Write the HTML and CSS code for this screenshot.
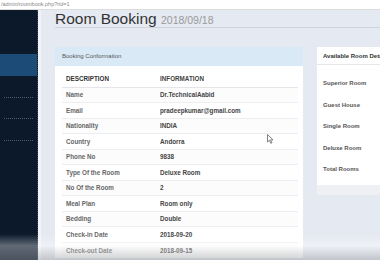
FILE: index.html
```html
<!DOCTYPE html>
<html lang="en">
<head>
  <meta charset="UTF-8">
  <title>Room Booking</title>
  <link rel="stylesheet" href="styles.css">
</head>
<body>
  <div class="urlbar">/admin/roombook.php?rid=1</div>
  <div class="app">
    <nav class="side">
      <div class="side-item"></div>
      <div class="side-item active"></div>
      <div class="side-item dots"></div>
      <div class="side-item dots"></div>
      <div class="side-item dots"></div>
    </nav>
    <div class="gutter"></div>
    <main class="main">
      <h1 class="page-title">Room Booking <small>2018/09/18</small></h1>

      <div class="row">
        <section class="panel booking">
          <div class="panel-head">Booking Conformation</div>
          <div class="panel-body">
            <table class="info">
              <tr><th>DESCRIPTION</th><th>INFORMATION</th></tr>
              <tr><td>Name</td><td>Dr.TechnicalAabid</td></tr>
              <tr><td>Email</td><td>pradeepkumar@gmail.com</td></tr>
              <tr><td>Nationality</td><td>INDIA</td></tr>
              <tr><td>Country</td><td>Andorra</td></tr>
              <tr><td>Phone No</td><td>9838</td></tr>
              <tr><td>Type Of the Room</td><td>Deluxe Room</td></tr>
              <tr><td>No Of the Room</td><td>2</td></tr>
              <tr><td>Meal Plan</td><td>Room only</td></tr>
              <tr><td>Bedding</td><td>Double</td></tr>
              <tr><td>Check-in Date</td><td>2018-09-20</td></tr>
              <tr><td>Check-out Date</td><td>2018-09-15</td></tr>
            </table>
          </div>
        </section>

        <section class="panel rooms">
          <div class="rooms-head">Available Room Details</div>
          <ul class="rooms-list">
            <li>Superior Room</li>
            <li>Guest House</li>
            <li>Single Room</li>
            <li>Deluxe Room</li>
            <li>Total Rooms</li>
          </ul>
          <div class="rooms-foot"></div>
        </section>
      </div>
    </main>
  </div>

  <!-- mouse pointer -->
  <svg class="cursor" width="7" height="10" viewBox="0 0 7 10">
    <path d="M0.5 0.5 L0.5 8 L2.4 6.3 L3.8 9.3 L4.9 8.8 L3.5 5.9 L6 5.9 Z" fill="#fff" stroke="#666" stroke-width="0.8"/>
  </svg>
  <div class="fade"></div>
</body>
</html>
```

FILE: styles.css
```css
*{margin: 0; padding: 0; box-sizing: border-box;}
html, body{width: 380px; height: 260px; overflow: hidden;}
body{
  font-family: "Liberation Sans", Arial, sans-serif;
  background: #e5e9f1;
  position: relative;
}
.urlbar{
  height: 10px;
  background: #fff;
  border-bottom: 1px solid #dcdcdc;
  font-size: 5.5px; line-height: 9px;
  color: #8a8a8a;
  padding-left: 1px;
}
.app{display: flex; height: 250px;}

/* sidebar */
.side{
  width: 38px;
  background: #0b192b;
  border-right: 1px dotted #34465a;
  padding-top: 22px;
}
.side-item{height: 22px;}
.side-item.active{background: #1c4b78;}
.side-item.dots{
  height: 21.5px;
  border-bottom: 1px dotted #4a5b6e;
  margin: 0 4px;
}
.gutter{width: 3px; background: #f1f3f7;}

/* main */
.main{flex: 1; padding-left: 14px; overflow: hidden;}
.page-title{
  font-weight: normal;
  font-size: 15.5px;
  color: #333;
  height: 18px; line-height: 17px;
  border-bottom: 1px solid #cfd3da;
  white-space: nowrap;
}
.page-title small{font-size: 10.5px; color: #999;}

.row{display: flex; gap: 14px; margin-top: 19px; align-items: flex-start;}
.panel{background: #fff; flex-shrink: 0;}
.booking{width: 248px;}
.panel-head{
  height: 19px;
  background: #d9e9f6;
  font-size: 6px; line-height: 19px;
  color: #555;
  padding-left: 7px;
}
.panel-body{padding: 5px 5px 0 7px;}

.info{width: 100%; border-collapse: collapse;}
.info th, .info td{
  height: 15.5px;
  font-size: 6.3px; font-weight: bold;
  text-align: left;
  padding-left: 4px;
  border-top: 1px solid #eceef0;
  white-space: nowrap;
}
.info th{color: #333; height: 16px; border-top: none; border-bottom: 1px solid #e3e5e8;}
.info td{color: #666;}
.info td + td, .info th + th{width: 142px; color: #444;}
.info tr:nth-child(even) td{background: #fcfcfc;}

/* available rooms */
.rooms{width: 80px;}
.rooms-head{
  height: 18px;
  font-size: 6px; font-weight: bold; line-height: 19px;
  color: #333;
  padding-left: 6px;
  border-bottom: 1px solid #e6e8eb;
  white-space: nowrap;
}
.rooms-list{list-style: none; padding: 8px 0 4px 6px;}
.rooms-list li{
  height: 21.5px;
  font-size: 6px; font-weight: bold; line-height: 21.5px;
  color: #555;
  white-space: nowrap;
}
.rooms-foot{height: 10px; background: #eef0f3;}

/* overlays */
.cursor{position: absolute; left: 267px; top: 134px;}
.fade{
  position: absolute; left: 0; right: 0; bottom: 0;
  height: 26px;
  background: linear-gradient(to bottom, rgba(255,255,255,0), rgba(255,255,255,0.35) 45%, rgba(150,152,156,0.45) 100%);
  pointer-events: none;
}
```
